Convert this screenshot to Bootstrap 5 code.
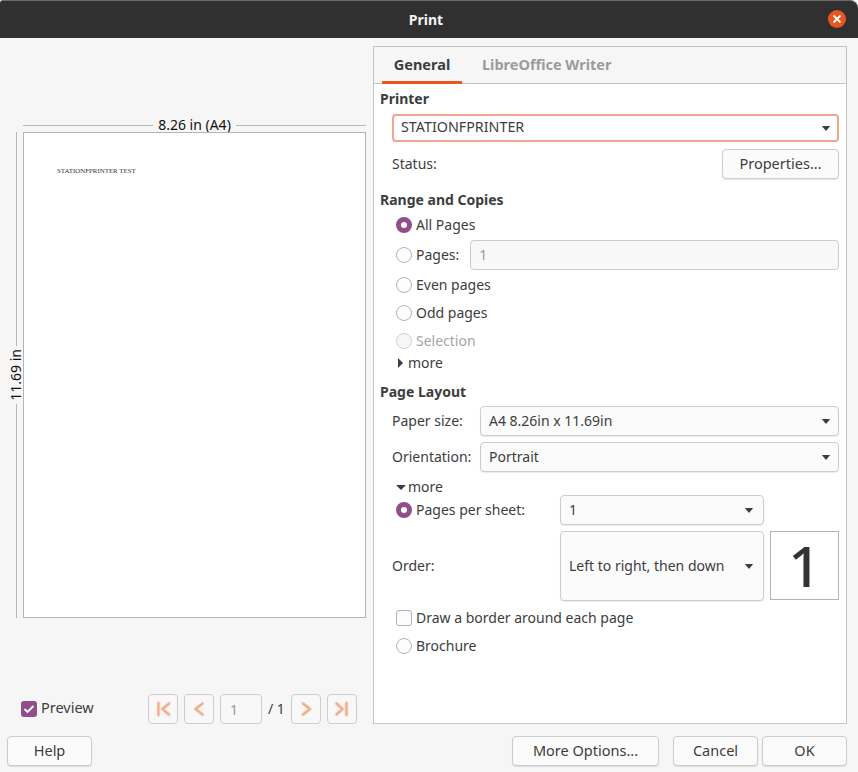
<!DOCTYPE html>
<html lang="en">
<head>
  <meta charset="UTF-8">
  <title>Print</title>
  <link href="https://cdn.jsdelivr.net/npm/bootstrap@5.3.3/dist/css/bootstrap.min.css" rel="stylesheet">
  <style>
    html, body { margin: 0; height: 772px; overflow: hidden; background: #f6f6f6; }
    body { font-family: "Noto Sans", "Open Sans", sans-serif; font-size: 14px; color: #3d3d3d; }
    .dlg { width: 858px; height: 772px; }
    .dlg-title { height: 38px; padding-right: 6px; background: #303030; border-top: 1px solid #6a6a6a; border-radius: 3px 8px 0 0; color: #f4f4f4; font-weight: 700; }
    .dlg-close { right: 12px; top: 9px; width: 18px; height: 18px; background: #e9541f; border-radius: 50%; }
    .dlg-main { height: 686px; }
    .lab { padding-bottom: 2px; }

    /* left side, page preview */
    .prev-col { width: 373px; }
    .prev-stage { margin-top: 80px; display: grid; grid-template-columns: 23px 343px; grid-template-rows: 14px 486px; }
    .ruler-top { grid-column: 2; color: #111; line-height: 14px; gap: 5px; }
    .ruler-side { color: #111; line-height: 14px; width: 14px; margin-left: 9px; }
    .ruler-line { flex: 1 1 auto; background: #b8b8b8; }
    .ruler-top .ruler-line { height: 1px; }
    .ruler-side .ruler-line { width: 1px; }
    .ruler-side-text { writing-mode: vertical-rl; transform: rotate(180deg); margin: 3px 0; }
    .sheet { background: #fff; border: 1px solid #b4b4b4; padding: 33px; }
    .sheet-text { font-family: "Liberation Serif", serif; font-size: 6.9px; line-height: 9px; color: #333; }
    .prev-ctrl { height: 30px; margin-top: 76px; padding-left: 21px; }
    .tick { width: 16px; height: 16px; border-radius: 3px; background: #924d8b; }
    .preview-lbl { width: 107px; flex: none; font-size: 14.5px; }
    .nav-btn { width: 30px; height: 30px; border: 1px solid #cdcdcd; border-radius: 4px; background: #f8f8f8; padding: 0; }
    .ms-nav { margin-left: 6px; }
    .page-num { width: 42px; height: 30px; border: 1px solid #cdcdcd; border-radius: 4px; background: #f8f8f8; color: #9a9a9a; padding: 0 0 0 9px; font-size: 14px; }
    .page-total { width: 29px; padding-left: 6px; flex: none; }
    .arrow-glow { stroke: #f8dccf; stroke-width: 4; stroke-linecap: round; stroke-linejoin: round; fill: none; }
    .arrow-core { stroke: #eea888; stroke-width: 1.8; stroke-linecap: round; stroke-linejoin: round; fill: none; }

    /* right side, tabs and settings */
    .set-panel { width: 474px; height: 678px; margin-top: 8px; border: 1px solid #c4c4c4; background: #fff; }
    .tab-strip { height: 37px; background: #f6f6f6; border-bottom: 1px solid #c4c4c4; padding-left: 8px; font-size: 14.5px; }
    .tab-item { font-weight: 700; line-height: 34px; height: 37px; margin-left: 20px; color: #9b9b9b; }
    .tab-item.is-on { width: 80px; margin-left: 0; text-align: center; color: #3d3d3d; border-bottom: 3px solid #e95420; }
    .set-body { padding: 6px 7px 0 6px; }
    .sect-head { font-weight: 700; line-height: 18px; height: 18px; }
    .set-row { padding-left: 12px; }
    .rh-28 { height: 28px; }
    .rh-30 { height: 30px; }
    .rh-16 { height: 16px; }
    .rh-70 { height: 70px; }
    .gap-t1 { margin-top: 1px; }
    .gap-t2 { margin-top: 2px; }
    .gap-t3 { margin-top: 3px; }
    .gap-t5 { margin-top: 5px; }
    .gap-t6 { margin-top: 6px; }
    .gap-t7 { margin-top: 7px; }
    .gap-t12 { margin-top: 12px; }
    .lbl-88 { width: 88px; flex: none; }
    .lbl-order { width: 168px; flex: none; }
    .lbl-pps { width: 144px; flex: none; }
    .pick { font-size: 14px; color: #3d3d3d; border: 1px solid #cdcdcd; border-radius: 4px; box-shadow: 0 1px 1px rgba(0,0,0,.08); padding: 0 24px 2px 8px; height: 100%;
      background-color: #fbfbfb; background-size: 10px 5px; background-position: right 7px center;
      background-image: url("data:image/svg+xml,%3Csvg xmlns='http://www.w3.org/2000/svg' viewBox='0 0 12 6'%3E%3Cpath d='M1 0h10L6 6z' fill='%233d3d3d'/%3E%3C/svg%3E"); }
    .pick:focus { box-shadow: none; }
    .pick-on { font-size: 14.3px; border: 2px solid #f0a68c; padding-left: 7px; background-color: #fff; box-shadow: none; background-position: right 6px center; }
    .pick-wide { flex: 1 1 auto; width: auto; }
    .pick-204 { width: 204px; flex: none; background-position: right 9px center; }
    .pages-field { height: 30px; flex: 1 1 auto; margin-left: 11px; padding: 0 8px 2px; font-size: 14px; border: 1px solid #cdcdcd; border-radius: 4px; background: #f8f8f8; color: #9a9a9a; }
    .opt-mark { width: 16px; height: 16px; flex: none; margin: 0 4px 0 4px; border-radius: 50%; border: 1px solid #b4b4b4; background: #fcfcfc; }
    .opt-mark.is-sel { border: 5px solid #924d8b; background: #fff; }
    .opt-mark.is-off { border-color: #d0d0d0; background: #f6f6f6; }
    .opt-box { border-radius: 3px; }
    .txt-off { color: #a5a5a5; }
    .more-row { padding-left: 17px; line-height: 16px; }
    .caret-right { width: 0; height: 0; border-left: 5px solid #3d3d3d; border-top: 5px solid transparent; border-bottom: 5px solid transparent; margin: 0 5px 0 1px; }
    .caret-down { width: 0; height: 0; border-top: 5px solid #3d3d3d; border-left: 5px solid transparent; border-right: 5px solid transparent; margin: 0 2px 0 -1px; }
    .plain-btn { font-size: 14.5px; color: #3d3d3d; height: 30px; padding: 0 0 1px; background: #fbfbfb; border: 1px solid #cdcdcd; border-radius: 4px; box-shadow: 0 1px 1px rgba(0,0,0,.1); }
    .w-prop { width: 117px; }
    .w-help { width: 85px; }
    .w-more { width: 147px; margin-right: 14px; }
    .w-cancel { width: 85px; margin-right: 4px; }
    .w-ok { width: 85px; }
    .big-one { width: 69px; height: 69px; margin-left: 6px; border: 1px solid #b4b4b4; background: #fff; font-size: 57px; font-weight: 500; line-height: 1; color: #333; }
    .dlg-foot { height: 48px; padding: 12px 11px 0 7px; }
  </style>
</head>
<body>
  <div class="dlg d-flex flex-column">
    <div class="dlg-title position-relative d-flex align-items-center justify-content-center">
      Print
      <span class="dlg-close position-absolute d-flex align-items-center justify-content-center">
        <svg width="10" height="10" viewBox="0 0 10 10"><path d="M1.500 1.500l7 7M8.500 1.500l-7 7" stroke="#fff" stroke-width="1.8" fill="none"/></svg>
      </span>
    </div>

    <div class="dlg-main d-flex">
      <!-- preview -->
      <div class="prev-col flex-shrink-0">
        <div class="prev-stage">
          <div class="ruler-top d-flex align-items-center">
            <span class="ruler-line"></span><span>8.26 in (A4)</span><span class="ruler-line"></span>
          </div>
          <div class="ruler-side d-flex flex-column align-items-center">
            <span class="ruler-line"></span><span class="ruler-side-text">11.69 in</span><span class="ruler-line"></span>
          </div>
          <div class="sheet"><div class="sheet-text">STATIONFPRINTER TEST</div></div>
        </div>
        <div class="prev-ctrl d-flex align-items-center">
          <span class="tick d-flex align-items-center justify-content-center me-1">
            <svg width="14" height="14" viewBox="0 0 14 14"><path d="M2.500 7l3 3 6-6" stroke="#fff" stroke-width="1.800" fill="none"/></svg>
          </span>
          <span class="preview-lbl lab">Preview</span>
          <div class="d-flex align-items-center">
            <button class="nav-btn d-flex align-items-center justify-content-center" disabled>
              <svg width="16" height="16" viewBox="0 0 16 16"><path class="arrow-glow" d="M3.500 2v12M14 2.500L7.500 8l6.500 5.500"/><path class="arrow-core" d="M3.500 2v12M14 2.500L7.500 8l6.500 5.500"/></svg>
            </button>
            <button class="nav-btn d-flex align-items-center justify-content-center ms-nav" disabled>
              <svg width="16" height="16" viewBox="0 0 16 16"><path class="arrow-glow" d="M11.500 2.500L4.500 8l7 5.500"/><path class="arrow-core" d="M11.500 2.500L4.500 8l7 5.500"/></svg>
            </button>
            <input class="page-num ms-nav" value="1" disabled>
            <span class="page-total lab">/ 1</span>
            <button class="nav-btn d-flex align-items-center justify-content-center" disabled>
              <svg width="16" height="16" viewBox="0 0 16 16"><path class="arrow-glow" d="M5 2.500L12 8l-7 5.500"/><path class="arrow-core" d="M5 2.500L12 8l-7 5.500"/></svg>
            </button>
            <button class="nav-btn d-flex align-items-center justify-content-center ms-nav" disabled>
              <svg width="16" height="16" viewBox="0 0 16 16"><path class="arrow-glow" d="M12.500 2v12M2.500 2.500L8.500 8l-6 5.500"/><path class="arrow-core" d="M12.500 2v12M2.500 2.500L8.500 8l-6 5.500"/></svg>
            </button>
          </div>
        </div>
      </div>

      <!-- settings -->
      <div class="set-panel">
        <div class="tab-strip d-flex">
          <div class="tab-item is-on">General</div>
          <div class="tab-item">LibreOffice Writer</div>
        </div>
        <div class="set-body">
          <div class="sect-head">Printer</div>
          <div class="set-row rh-28 gap-t6 d-flex"><select class="form-select pick pick-on"><option>STATIONFPRINTER</option></select></div>
          <div class="set-row rh-30 gap-t7 d-flex align-items-center justify-content-between">
            <span class="lab">Status:</span><button class="plain-btn w-prop">Properties...</button>
          </div>

          <div class="sect-head gap-t12">Range and Copies</div>
          <div class="set-row rh-28 gap-t2 d-flex align-items-center"><span class="opt-mark is-sel"></span><span class="lab">All Pages</span></div>
          <div class="set-row rh-30 gap-t1 d-flex align-items-center"><span class="opt-mark"></span><span class="lab">Pages:</span><input class="pages-field" value="1" disabled></div>
          <div class="set-row rh-28 gap-t1 d-flex align-items-center"><span class="opt-mark"></span><span class="lab">Even pages</span></div>
          <div class="set-row rh-28 d-flex align-items-center"><span class="opt-mark"></span><span class="lab">Odd pages</span></div>
          <div class="set-row rh-28 d-flex align-items-center txt-off"><span class="opt-mark is-off"></span><span class="lab">Selection</span></div>
          <div class="more-row rh-16 d-flex align-items-center"><span class="caret-right"></span><span>more</span></div>

          <div class="sect-head gap-t12">Page Layout</div>
          <div class="set-row rh-30 gap-t5 d-flex align-items-center"><span class="lbl-88 lab">Paper size:</span><select class="form-select pick pick-wide"><option>A4 8.26in x 11.69in</option></select></div>
          <div class="set-row rh-30 gap-t6 d-flex align-items-center"><span class="lbl-88 lab">Orientation:</span><select class="form-select pick pick-wide"><option>Portrait</option></select></div>
          <div class="more-row rh-16 gap-t7 d-flex align-items-center"><span class="caret-down"></span><span>more</span></div>
          <div class="set-row rh-30 d-flex align-items-center"><span class="opt-mark is-sel"></span><span class="lbl-pps lab">Pages per sheet:</span><select class="form-select pick pick-204"><option>1</option></select></div>
          <div class="set-row rh-70 gap-t6 d-flex align-items-center"><span class="lbl-order lab">Order:</span><select class="form-select pick pick-204"><option>Left to right, then down</option></select>
            <div class="big-one d-flex align-items-center justify-content-center align-self-start">1</div>
          </div>
          <div class="set-row rh-28 gap-t3 d-flex align-items-center"><span class="opt-mark opt-box"></span><span class="lab">Draw a border around each page</span></div>
          <div class="set-row rh-28 d-flex align-items-center"><span class="opt-mark"></span><span class="lab">Brochure</span></div>
        </div>
      </div>
    </div>

    <div class="dlg-foot d-flex">
      <button class="plain-btn w-help">Help</button>
      <button class="plain-btn w-more ms-auto">More Options...</button>
      <button class="plain-btn w-cancel">Cancel</button>
      <button class="plain-btn w-ok">OK</button>
    </div>
  </div>
  <script src="https://cdn.jsdelivr.net/npm/bootstrap@5.3.3/dist/js/bootstrap.bundle.min.js"></script>
</body>
</html>
